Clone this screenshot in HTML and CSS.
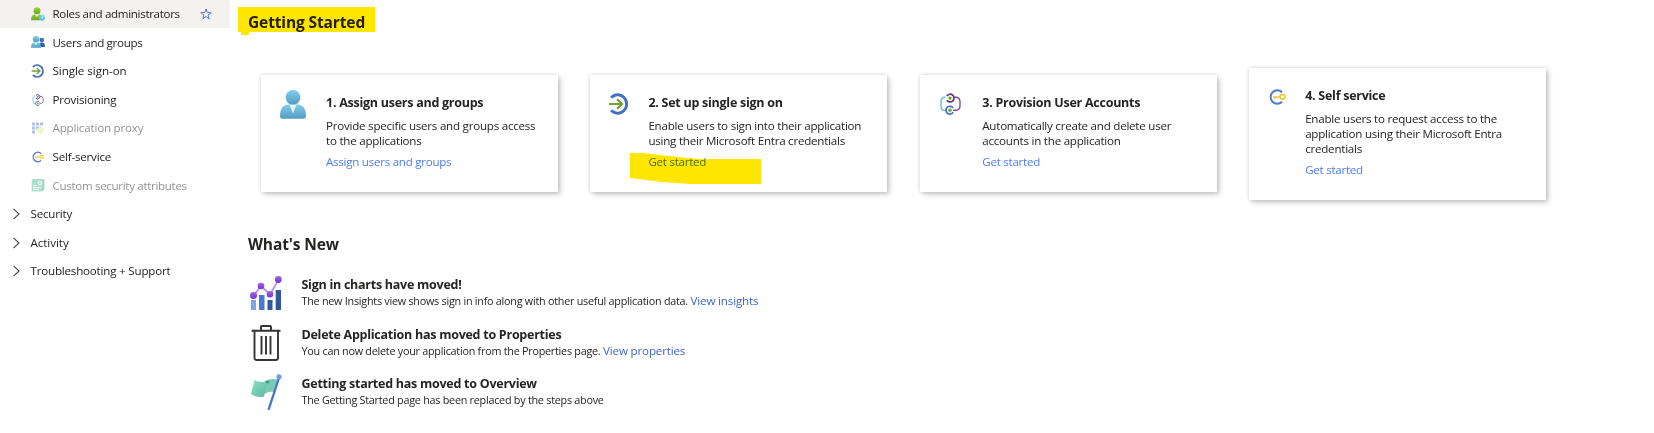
FILE: index.html
```
<!DOCTYPE html>
<html lang="en">
<head>
<meta charset="utf-8">
<title>Enterprise application overview</title>
<link rel="stylesheet" href="styles.css">
</head>
<body>
<svg class="defs" width="0" height="0" aria-hidden="true">
  <defs>
    <linearGradient id="blue" x1="0" y1="0" x2="0" y2="1"><stop offset="0" stop-color="#7fcdec"/><stop offset="1" stop-color="#559bc2"/></linearGradient>
    <linearGradient id="green" x1="0" y1="0" x2="0" y2="1"><stop offset="0" stop-color="#a0d43c"/><stop offset="1" stop-color="#6aa329"/></linearGradient>
    <linearGradient id="violet" x1="0" y1="0" x2="0" y2="1"><stop offset="0" stop-color="#a067e6"/><stop offset="1" stop-color="#6f35d0"/></linearGradient>
    <linearGradient id="mint" x1="0" y1="0" x2="1" y2="1"><stop offset="0" stop-color="#8be0c6"/><stop offset="1" stop-color="#5fb8a0"/></linearGradient>
    <symbol id="sso" viewBox="0 0 20 22">
      <path d="M3 3.800A9 9.300 0 1 1 3 18.200" fill="none" stroke="#4470c4" stroke-width="3" stroke-linecap="round"/>
      <path d="M0 11H13M8 6.300L13 11L8 15.700" fill="none" stroke="#77a22f" stroke-width="2.200"/>
    </symbol>
    <symbol id="provision" viewBox="0 0 21 22">
      <path d="M5.500 4.200H4.500Q1 4.700 1 8.200V13.500Q1 17 4.500 17.500H5.500" fill="none" stroke="#76b3dc" stroke-width="1.400"/>
      <path d="M14 4.200H16Q20 4.700 20 8.500V13Q20 17 16 17.300H13" fill="none" stroke="#7f4ba0" stroke-width="1.400"/>
      <path d="M6.800 3A3.900 3.900 0 1 1 6.800 7.200" fill="none" stroke="#672f85" stroke-width="1.700"/>
      <path d="M13.200 15A3.900 3.900 0 1 0 13.200 19.300" fill="none" stroke="#3f73c4" stroke-width="1.700"/>
      <circle cx="10" cy="5.100" r="1.700" fill="#6ba326"/><circle cx="10" cy="17.200" r="1.700" fill="#6ba326"/>
    </symbol>
    <symbol id="self" viewBox="0 0 17 16">
      <path d="M13 3.200A6.700 6.700 0 1 0 13 12.800" fill="none" stroke="#5078ca" stroke-width="1.900"/>
      <path d="M4 8H11M5.500 8V10" fill="none" stroke="#f4c63c" stroke-width="1.600"/>
      <circle cx="13.500" cy="7.700" r="2.400" fill="#fff" stroke="#f2cb3c" stroke-width="1.700"/>
    </symbol>
    <symbol id="chevron" viewBox="0 0 8 12"><path d="M1.500 .8L7 6L1.500 11.200" fill="none" stroke="#444" stroke-width="1.100"/></symbol>
  </defs>
</svg>
<div class="page">
  <nav class="sidebar">
    <a class="item active"><svg class="ico" viewBox="0 0 14 14"><circle cx="6" cy="3.700" r="3.500" fill="url(#green)"/><path d="M0 13.300Q0 7.200 4 7.200L6 10L8 7.200Q12 7.200 12 13.300Z" fill="url(#green)"/><circle cx="11" cy="10.800" r="3" fill="#62c5e6"/><path d="M11 7.800V11L13.600 9.300" fill="none" stroke="#e4f6fc" stroke-width=".8"/></svg><span class="tight">Roles and administrators</span><svg class="star" viewBox="0 0 12 12"><path d="M6 1L7.300 4.600L11.200 4.700L8.100 7L9.200 10.800L6 8.600L2.800 10.800L3.900 7L.8 4.700L4.700 4.600Z" fill="none" stroke="#4a63dc" stroke-width=".9"/></svg></a>
    <a class="item"><svg class="ico" viewBox="0 0 14 14"><circle cx="10.800" cy="5" r="2.300" fill="#3f6fc4"/><path d="M7.500 12Q7.500 7.600 10.800 7.600Q14 7.600 14 12Z" fill="#315fae"/><circle cx="5" cy="4.300" r="3.200" fill="url(#blue)"/><path d="M0 12.800Q0 7.500 3.500 7.500L5 9.800L6.500 7.500Q10 7.500 10 12.800Z" fill="url(#blue)"/></svg><span class="tight">Users and groups</span></a>
    <a class="item"><svg class="ico"><use href="#sso"/></svg><span class="loose">Single sign-on</span></a>
    <a class="item"><svg class="ico small"><use href="#provision"/></svg><span>Provisioning</span></a>
    <a class="item off"><svg class="ico" viewBox="0 0 14 14"><path d="M1 1.500h3v3h-3zM5 1.500h3v3h-3zM9 1.500h3v3h-3zM1 5.500h3v3h-3zM5 5.500h3v3h-3zM1 9.500h3v3h-3z" fill="#6b87c6"/><path d="M9.300 4.800L13.600 9.100L9.300 13.400L5 9.100Z" fill="#d7df83"/><path d="M9.300 7L11.200 9.100L9.300 11.200L7.400 9.100Z" fill="none" stroke="#fff" stroke-width=".8"/></svg><span>Application proxy</span></a>
    <a class="item"><svg class="ico small"><use href="#self"/></svg><span>Self-service</span></a>
    <a class="item off"><svg class="ico" viewBox="0 0 14 14"><path d="M1.500 1H13.500V11.500L11.500 13.500H.7V1.800Z" fill="#5dc0a0"/><path d="M12.300 2V12.300" stroke="#2e9a83" stroke-width=".8"/><circle cx="9" cy="5.200" r="1.700" fill="none" stroke="#fff"/><path d="M2 7.500H5.500M2 9.500H10M2 11.300H8" stroke="#fff" stroke-width=".9"/></svg><span class="tight">Custom security attributes</span></a>
    <a class="item group"><svg class="chev"><use href="#chevron"/></svg><span>Security</span></a>
    <a class="item group"><svg class="chev"><use href="#chevron"/></svg><span class="loose">Activity</span></a>
    <a class="item group"><svg class="chev"><use href="#chevron"/></svg><span>Troubleshooting + Support</span></a>
  </nav>
  <main class="main">
    <h2 class="heading"><span>Getting Started</span><svg class="marker marker-heading" viewBox="0 0 137 28"><path d="M0 0H137V25H11V28H3V25H0Z" fill="#ffe600"/></svg></h2>
    <section class="cards">
      <article class="card card-users"><svg class="card-icon" viewBox="0 0 26 29"><circle cx="13" cy="7.500" r="7.400" fill="url(#blue)"/><path d="M0 26.500Q0 14.500 9 14.500H17Q26 14.500 26 26.500Q26 28.800 23.500 28.800H2.500Q0 28.800 0 26.500Z" fill="url(#blue)"/><path d="M9.500 14.700H16.500L13 23.500Z" fill="#e6f3fa"/></svg><div><h3>1. Assign users and groups</h3><p>Provide specific users and groups access<br>to the applications</p><a class="link">Assign users and groups</a></div></article>
      <article class="card card-sso"><svg class="card-icon"><use href="#sso"/></svg><div><h3>2. Set up single sign on</h3><p>Enable users to sign into their application<br>using their Microsoft Entra credentials</p><a class="link">Get started</a></div><svg class="marker marker-card" viewBox="0 0 131 31"><path d="M0 0H14Q45 4 70 6H131V31H60Q30 29.500 0 25Z" fill="#ffe600"/></svg></article>
      <article class="card card-provision"><svg class="card-icon"><use href="#provision"/></svg><div><h3>3. Provision User Accounts</h3><p>Automatically create and delete user<br>accounts in the application</p><a class="link">Get started</a></div></article>
      <article class="card card-self"><svg class="card-icon"><use href="#self"/></svg><div><h3>4. Self service</h3><p>Enable users to request access to the<br>application using their Microsoft Entra<br>credentials</p><a class="link">Get started</a></div></article>
    </section>
    <h2 class="heading news-heading"><span>What's New</span></h2>
    <section class="news">
      <article class="entry"><svg class="news-icon" viewBox="0 0 32 36"><path d="M1 25h5v10H1z" fill="#7fa3ee"/><path d="M9 20h5.500v15H9z" fill="#4a78cf"/><path d="M17.500 25h5v10h-5zM25.700 15H31v20h-5.300z" fill="#34589c"/><path d="M3.500 21L11 11L20 19.500L28.500 5" fill="none" stroke="#b898f0" stroke-width="1.900"/><g fill="url(#violet)"><circle cx="3.500" cy="20.500" r="3.500"/><circle cx="11" cy="11" r="3.300"/><circle cx="20" cy="19.200" r="3.300"/><circle cx="28.300" cy="4.500" r="3.400"/></g></svg><div><h3>Sign in charts have moved!</h3><p><span>The new Insights view shows sign in info along with other useful application data.</span> <a class="link">View insights</a></p></div></article>
      <article class="entry"><svg class="news-icon" viewBox="0 0 32 36"><path d="M1.500 5.800H30.500M11 5.300V1.800Q11 1 12 1H20Q21 1 21 1.800V5.300M4.500 6V33Q4.500 35 6.500 35H25.500Q28 35 28 33V6" fill="none" stroke="#333" stroke-width="1.900"/><path d="M11.500 11V29.500M16 11V29.500M20.500 11V29.500" stroke="#333" stroke-width="1.900"/></svg><div><h3>Delete Application has moved to Properties</h3><p><span>You can now delete your application from the Properties page.</span> <a class="link">View properties</a></p></div></article>
      <article class="entry"><svg class="news-icon" viewBox="0 0 32 36"><path d="M15 7Q20 4 28 5.500L24 18Q18 17 15 20Z" fill="#79cbb6"/><path d="M4.500 6Q10 9.500 18 7L14 22.500Q8 24.500 1 20Z" fill="url(#mint)"/><path d="M15 7.200L19.800 7L17.500 9.800Z" fill="#348b77"/><path d="M29 4L18.500 35.800" stroke="#4674cc" stroke-width="2.300"/><circle cx="29" cy="2.800" r="2.600" fill="#729bea"/></svg><div><h3>Getting started has moved to Overview</h3><p><span>The Getting Started page has been replaced by the steps above</span></p></div></article>
    </section>
  </main>
</div>
</body>
</html>
```
FILE: styles.css
```
* { box-sizing: border-box; }
body { margin: 0; background: #fff; color: #252423; font: 11.600px/15.400px "Open Sans", "Noto Sans", sans-serif; }
h2, h3, p { margin: 0; }
.defs { position: absolute; }
.page { display: flex; height: 433px; overflow: hidden; }
.sidebar { width: 230px; flex: none; margin-top: -.5px; }
.item { display: flex; align-items: center; height: 28.600px; padding-left: 31px; white-space: nowrap; letter-spacing: -.2px; }
.tight { letter-spacing: -.33px; }
.loose { letter-spacing: -.05px; }
.item.active { background: #f3f2f1; }
.item.off { opacity: .5; }
.item.group { padding-left: 12px; }
.ico { width: 14px; height: 14px; margin-right: 7.500px; }
.ico.small { width: 12px; height: 12px; margin: 0 8.500px 0 1px; }
.star { width: 12px; height: 12px; margin-left: auto; margin-right: 18px; }
.chev { width: 8px; height: 12px; margin-right: 10.500px; }
.main { flex: 1; padding: 12px 0 0 18px; }
.heading { position: relative; font-size: 15.500px; line-height: 20px; font-weight: 700; letter-spacing: -.12px; }
.marker { position: absolute; mix-blend-mode: multiply; }
.marker-heading { left: -10px; top: -5px; width: 137px; height: 28px; }
.marker-card { left: 40px; top: 78px; width: 131px; height: 31px; }
.cards { display: flex; align-items: center; gap: 32.400px; height: 132px; margin: 35.500px 0 0 13px; }
.card { position: relative; display: flex; align-items: flex-start; width: 297px; height: 117px; padding: 18px 0 0; background: #fff; box-shadow: 0 0 4px rgba(0,0,0,.18), 3px 3px 5px rgba(0,0,0,.16); white-space: nowrap; letter-spacing: -.24px; }
.card-self { height: 132px; }
.card h3, .entry h3 { font-size: 12.500px; line-height: 18px; font-weight: 700; letter-spacing: -.26px; }
.card h3 { margin-top: 1px; }
.card p { margin: 6px 0 5px; }
.link { color: #4f7cf0; letter-spacing: -.27px; }
.card .link { display: block; }
.card-icon { flex: none; }
.card-users .card-icon { width: 26px; height: 29px; margin: -3px 20px 0 19px; }
.card-sso .card-icon { width: 20px; height: 22px; margin: 0 19px 0 19px; }
.card-provision .card-icon { width: 21px; height: 22px; margin: 0 21px 0 20.500px; }
.card-self .card-icon { width: 17px; height: 16px; margin: 3px 19.500px 0 19.500px; }
.news-heading { margin-top: 34.500px; }
.news { margin: 19px 0 0 2px; }
.entry { display: flex; height: 49.500px; white-space: nowrap; }
.news-icon { width: 32px; height: 36px; margin: 2px 19.500px 0 0; }
.entry h3 { margin-top: 3px; }
.entry p { margin-top: -1px; font-size: 10.800px; line-height: 15px; letter-spacing: -.25px; }
.entry .link { font-size: 11.600px; color: #3f66cc; letter-spacing: -.16px; }
```
